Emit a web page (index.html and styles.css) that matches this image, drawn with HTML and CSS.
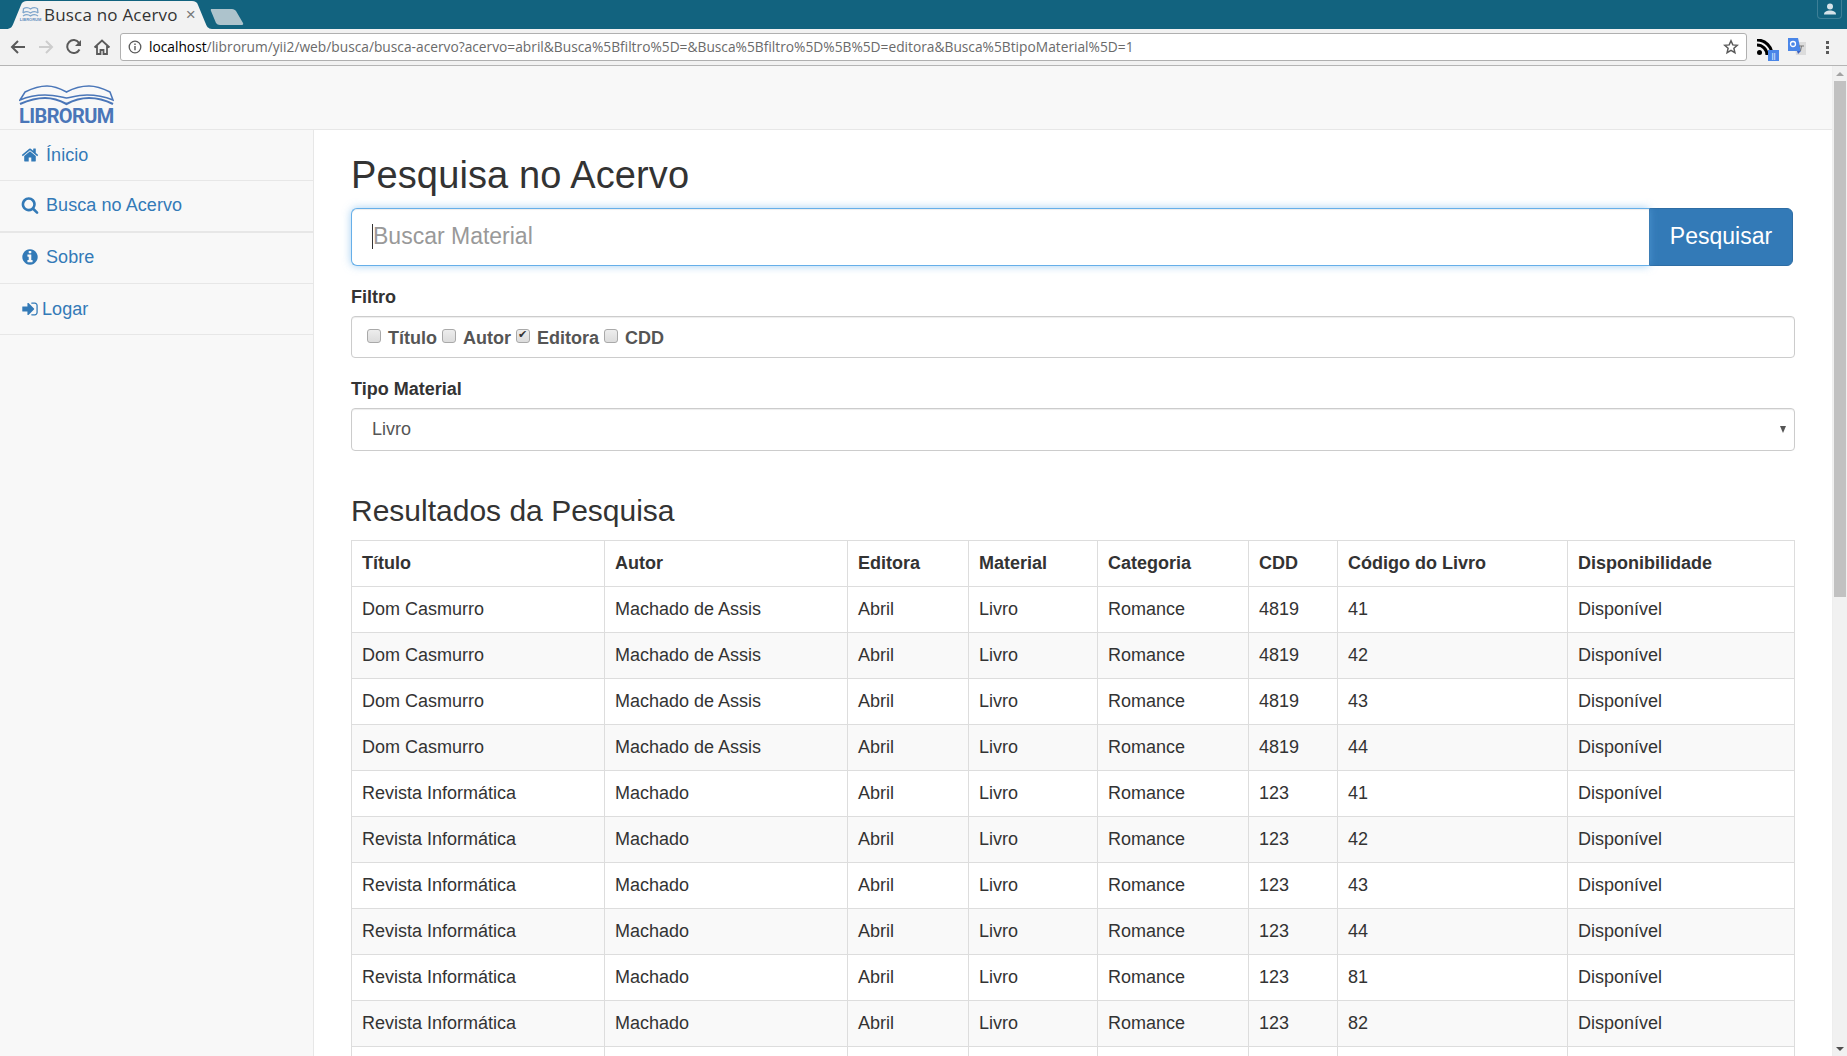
FILE: index.html
```html
<!DOCTYPE html>
<html lang="en">
<head>
    <meta charset="UTF-8">
    <meta name="viewport" content="width=device-width, initial-scale=1.0">
    <title>Busca no Acervo</title>
    <link rel="stylesheet" href="styles.css">
</head>
<body>
    <div class="tabstrip">
        <div class="tab">
            <svg class="tab-bg" width="212" height="29" viewBox="0 0 212 29"><path d="M6 29c5 0 6-2 8-7L21 5c1-3 3-4 6-4h165c3 0 5 1 6 4l7 17c2 5 3 7 8 7z" fill="#f2f2f2"/></svg>
            <span class="favicon">
                <svg width="17" height="11" viewBox="0 0 17 11"><path d="M1 3c3-2 5-2 7.500 0 3-2 5-2 7.500 0M1 7l.5-4M16 7l-.5-4M1 7c3-2 5-2 7.500 0 3-2 5-2 7.500 0M1 10c3-2 5-2 7.500 0 3-2 5-2 7.500 0" fill="none" stroke="#7fa6cc" stroke-width="1.300"/></svg>
                <span class="favicon-text">LIBRORUM</span>
            </span>
            <span class="tab-title">Busca no Acervo</span>
            <span class="tab-close">×</span>
        </div>
        <svg class="newtab" width="34" height="17" viewBox="0 0 34 17"><path d="M1 1h21c2 0 3 1 4 2l7 12c.5 1 0 2-1 2H10c-2 0-3-1-4-2L1 3c-.5-1 0-2 0-2z" fill="#adc3cc"/></svg>
        <div class="profile">
            <svg width="14" height="12" viewBox="0 0 14 12"><circle cx="7" cy="3.500" r="3" fill="#d5e3e9"/><path d="M1 11.500c0-3 3-4 6-4s6 1 6 4z" fill="#d5e3e9"/></svg>
        </div>
    </div>

    <div class="toolbar">
        <svg class="tool" width="18" height="18" viewBox="0 0 18 18"><path d="M16 9H4M9 3L3 9l6 6" fill="none" stroke="#5a5a5a" stroke-width="2"/></svg>
        <svg class="tool" width="18" height="18" viewBox="0 0 18 18"><path d="M2 9h12M9 3l6 6-6 6" fill="none" stroke="#cdcdcd" stroke-width="2"/></svg>
        <svg class="tool" width="18" height="18" viewBox="0 0 18 18"><path d="M14.500 11.500A6.500 6.500 0 1 1 14 4.800" fill="none" stroke="#5a5a5a" stroke-width="2"/><path d="M16 2v6h-6z" fill="#5a5a5a"/></svg>
        <svg class="tool" width="18" height="18" viewBox="0 0 18 18"><path d="M1.500 9.500L9 2.500l7.500 7M4 8v8h3.500v-4h3v4H14V8" fill="none" stroke="#5a5a5a" stroke-width="1.800"/></svg>
        <div class="omnibox">
            <svg class="info" width="14" height="14" viewBox="0 0 14 14"><circle cx="7" cy="7" r="5.800" fill="none" stroke="#5a5a5a" stroke-width="1.300"/><path d="M6.300 6h1.400v4.300H6.300zM6.300 3.500h1.400v1.400H6.300z" fill="#5a5a5a"/></svg>
            <span class="url"><b>localhost</b>/librorum/yii2/web/busca/busca-acervo?acervo=abril&amp;Busca%5Bfiltro%5D=&amp;Busca%5Bfiltro%5D%5B%5D=editora&amp;Busca%5BtipoMaterial%5D=1</span>
            <svg class="star" width="16" height="16" viewBox="0 0 16 16"><path d="M8 1.800l1.800 4.100 4.500.4-3.400 3 1 4.400L8 11.400l-3.900 2.300 1-4.400-3.400-3 4.500-.4z" fill="none" stroke="#5a5a5a" stroke-width="1.500"/></svg>
        </div>
        <div class="ext-rss">
            <svg width="16" height="16" viewBox="0 0 16 16"><circle cx="2.500" cy="13.500" r="2.500"/><path d="M0 6a10 10 0 0 1 10 10M0 1a15 15 0 0 1 15 15" fill="none" stroke="#000" stroke-width="3"/></svg>
            <span class="ext-badge">||</span>
        </div>
        <svg class="ext-translate" width="18" height="18" viewBox="0 0 18 18"><path d="M6 4h12v13H8z" fill="#dcdcdc"/><path d="M0 0h10l3 13H0z" fill="#4a86e8"/><circle cx="5" cy="6" r="2.500" fill="none" stroke="#fff" stroke-width="1.300"/><path d="M9 13l1 3 3-3z" fill="#3a5fc0"/><path d="M11 8h5M13.500 8l-1 5" stroke="#777" fill="none"/></svg>
        <div class="menu-dots"><i></i><i></i><i></i></div>
    </div>

    <div class="viewport">
        <div class="page">
            <div class="navbar">
                <a class="logo" href="#">
                    <svg width="95" height="23" viewBox="0 0 95 23"><path d="M6 8C14 4 22 2 28 2c8 0 14 3 19.500 6C53 5 60 2 70 2c8 0 15 3 21 6l3 8c-10-4-18-5-26-5-8 0-15 2-20.500 3C42 13 34 11 26 11c-8 0-18 2-25 5z" fill="none" stroke="#4a76b8" stroke-width="1.600"/><path d="M1 20c9-4 17-6 25-6 8 0 16 3 21.500 6C53 17 60 14 70 14c8 0 16 2 24 6" fill="none" stroke="#4a76b8" stroke-width="2.200"/></svg>
                    <span class="logo-text">LIBRORUM</span>
                </a>
            </div>
            <div class="main">
                <ul class="sidebar">
                    <li><a href="#"><svg class="ico" width="18" height="18" viewBox="0 0 1792 1792"><path d="M1472 992v480q0 26-19 45t-45 19h-384v-384h-256v384h-384q-26 0-45-19t-19-45v-480q0-1 .5-3t.5-3l575-474 575 474q1 2 1 6zm223-69l-62 74q-8 9-21 11h-3q-13 0-21-7l-692-577-692 577q-12 8-24 7-13-2-21-11l-62-74q-8-10-7-23.500t11-21.500l719-599q32-26 76-26t76 26l244 204v-195q0-14 9-23t23-9h192q14 0 23 9t9 23v408l219 182q10 8 11 21.500t-7 23.500z"/></svg><span class="gap">Ínicio</span></a></li>
                    <li><a href="#"><svg class="ico" width="18" height="18" viewBox="0 0 1792 1792"><path d="M1216 832q0-185-131.500-316.500t-316.500-131.500-316.500 131.500-131.500 316.500 131.500 316.500 316.500 131.500 316.500-131.500 131.500-316.500zm512 832q0 52-38 90t-90 38q-54 0-90-38l-343-342q-179 124-399 124-143 0-273.500-55.500t-225-150-150-225-55.500-273.500 55.500-273.500 150-225 225-150 273.500-55.500 273.500 55.500 225 150 150 225 55.500 273.500q0 220-124 399l343 343q37 37 37 90z"/></svg><span class="gap">Busca no Acervo</span></a></li>
                    <li><a href="#"><svg class="ico" width="18" height="18" viewBox="0 0 1792 1792"><path d="M1152 1376v-160q0-14-9-23t-23-9h-96v-512q0-14-9-23t-23-9h-320q-14 0-23 9t-9 23v160q0 14 9 23t23 9h96v320h-96q-14 0-23 9t-9 23v160q0 14 9 23t23 9h448q14 0 23-9t9-23zm-128-896v-160q0-14-9-23t-23-9h-192q-14 0-23 9t-9 23v160q0 14 9 23t23 9h192q14 0 23-9t9-23zm640 416q0 209-103 385.500t-279.500 279.500-385.500 103-385.500-103-279.500-279.500-103-385.500 103-385.500 279.500-279.500 385.500-103 385.500 103 279.500 279.500 103 385.500z"/></svg><span class="gap">Sobre</span></a></li>
                    <li><a href="#"><svg class="ico" width="18" height="18" viewBox="0 0 1792 1792"><path d="M1312 896q0 26-19 45l-544 544q-19 19-45 19t-45-19-19-45v-288h-448q-26 0-45-19t-19-45v-384q0-26 19-45t45-19h448v-288q0-26 19-45t45-19 45 19l544 544q19 19 19 45zm352-352v704q0 119-84.500 203.500t-203.500 84.500h-320q-13 0-22.500-9.500t-9.500-22.500q0-4-1-20t-.5-26.500 3-23.500 10-19.500 20.500-6.500h320q66 0 113-47t47-113v-704q0-66-47-113t-113-47h-312l-11.500-1-11.500-3-8-5.500-7-9-2-13.500q0-4-1-20t-.5-26.500 3-23.500 10-19.500 20.500-6.500h320q119 0 203.500 84.500t84.500 203.500z"/></svg><span class="gap-small">Logar</span></a></li>
                </ul>
                <div class="content">
                    <h1>Pesquisa no Acervo</h1>
                    <div class="search-group">
                        <div class="search-field">
                            <input class="search-input" type="text" placeholder="Buscar Material">
                            <span class="caret"></span>
                        </div>
                        <button class="search-btn">Pesquisar</button>
                    </div>
                    <label class="field-label">Filtro</label>
                    <div class="filter-box">
                        <label><input type="checkbox"><span>Título</span></label>
                        <label><input type="checkbox"><span>Autor</span></label>
                        <label><input type="checkbox" checked><span>Editora</span></label>
                        <label><input type="checkbox"><span>CDD</span></label>
                    </div>
                    <label class="field-label">Tipo Material</label>
                    <div class="select-box">Livro</div>
                    <h2>Resultados da Pesquisa</h2>
                    <table>
                        <thead>
                            <tr>
                                <th class="c1">Título</th>
                                <th class="c2">Autor</th>
                                <th class="c3">Editora</th>
                                <th class="c4">Material</th>
                                <th class="c5">Categoria</th>
                                <th class="c6">CDD</th>
                                <th class="c7">Código do Livro</th>
                                <th class="c8">Disponibilidade</th>
                            </tr>
                        </thead>
                        <tbody id="rows"></tbody>
                    </table>
                </div>
            </div>
        </div>
        <div class="scrollbar">
            <span class="arrow-up"></span>
            <div class="thumb"></div>
            <span class="arrow-down"></span>
        </div>
    </div>

    <script type="text/javascript">
        const livros = [
            ["Dom Casmurro", "Machado de Assis", "4819", "41"],
            ["Dom Casmurro", "Machado de Assis", "4819", "42"],
            ["Dom Casmurro", "Machado de Assis", "4819", "43"],
            ["Dom Casmurro", "Machado de Assis", "4819", "44"],
            ["Revista Informática", "Machado", "123", "41"],
            ["Revista Informática", "Machado", "123", "42"],
            ["Revista Informática", "Machado", "123", "43"],
            ["Revista Informática", "Machado", "123", "44"],
            ["Revista Informática", "Machado", "123", "81"],
            ["Revista Informática", "Machado", "123", "82"]
        ];
        let tbl = "";
        livros.map((val) => {
            tbl += `
                <tr>
                    <td>${val[0]}</td>
                    <td>${val[1]}</td>
                    <td>Abril</td>
                    <td>Livro</td>
                    <td>Romance</td>
                    <td>${val[2]}</td>
                    <td>${val[3]}</td>
                    <td>Disponível</td>
                </tr>
            `;
        });
        // next row starts right at the fold, its text is below the window
        tbl += "<tr>" + "<td></td>".repeat(8) + "</tr>";
        document.getElementById("rows").innerHTML = tbl;
    </script>
</body>
</html>
```

FILE: styles.css
```css
* {
    box-sizing: border-box;
}
html, body {
    height: 100%;
}
body {
    margin: 0;
    overflow: hidden;
    font-family: "Liberation Sans", Arial, sans-serif;
    font-size: 18px;
    color: #333;
    background: #fff;
}

/* browser chrome */
.tabstrip {
    position: relative;
    display: flex;
    align-items: flex-end;
    height: 29px;
    background: #12637f;
}
.tab {
    position: relative;
    display: flex;
    align-items: center;
    width: 212px;
    height: 29px;
    padding: 0 0 0 22px;
    flex-shrink: 0;
}
.tab-bg {
    position: absolute;
    left: 0;
    top: 0;
}
.favicon {
    position: relative;
    display: flex;
    flex-direction: column;
    align-items: center;
    width: 17px;
    line-height: 6px;
}
.favicon-text {
    font-size: 4px;
    font-weight: bold;
    color: #5f8fbe;
}
.tab-title {
    position: relative;
    margin-left: 5px;
    font-family: "Open Sans", sans-serif;
    font-size: 17px;
    letter-spacing: .2px;
    color: #333;
    white-space: nowrap;
}
.tab-close {
    position: relative;
    margin-left: 8px;
    font-size: 17px;
    color: #777;
}
.newtab {
    margin: 0 0 4px -2px;
}
.profile {
    position: absolute;
    top: 0;
    right: 5px;
    display: flex;
    align-items: center;
    justify-content: center;
    width: 25px;
    height: 19px;
    border: 1px solid #3d7f97;
    border-top: none;
    border-radius: 0 0 4px 4px;
}
.toolbar {
    display: flex;
    align-items: center;
    height: 37px;
    padding: 0 0 0 9px;
    background: #f2f2f2;
    border-bottom: 1px solid #b5b5b5;
}
.tool {
    margin-right: 10px;
    flex-shrink: 0;
}
.omnibox {
    display: flex;
    align-items: center;
    width: 1627px;
    height: 28px;
    margin-left: -1px;
    padding: 0 7px;
    background: #fff;
    border: 1px solid #b0b0b0;
    border-radius: 3px;
    flex-shrink: 0;
}
.info {
    flex-shrink: 0;
}
.url {
    flex: 1;
    margin: -2px 0 0 7px;
    font-family: "Open Sans", sans-serif;
    font-size: 13.750px;
    color: #6a6a6a;
    white-space: nowrap;
    overflow: hidden;
}
.url b {
    font-weight: normal;
    color: #000;
}
.ext-rss {
    position: relative;
    width: 22px;
    height: 22px;
    margin: 6px 0 0 10px;
    flex-shrink: 0;
}
.ext-rss svg {
    position: absolute;
    left: 0;
    top: 0;
}
.ext-badge {
    position: absolute;
    right: 0;
    bottom: 0;
    width: 11px;
    height: 11px;
    background: #4a86e8;
    color: #fff;
    font-size: 8px;
    line-height: 11px;
    text-align: center;
}
.ext-translate {
    margin-left: 9px;
    flex-shrink: 0;
}
.menu-dots {
    display: flex;
    flex-direction: column;
    gap: 2px;
    margin-left: 20px;
}
.menu-dots i {
    width: 3px;
    height: 3px;
    background: #5a5a5a;
}

/* page */
.viewport {
    display: flex;
    height: 990px;
}
.page {
    flex: 1;
    min-width: 0;
    overflow: hidden;
}
.navbar {
    height: 64px;
    background: #f8f8f8;
    border-bottom: 1px solid #e7e7e7;
}
.logo {
    display: inline-flex;
    flex-direction: column;
    align-items: flex-start;
    margin: 18px 0 0 19px;
    text-decoration: none;
}
.logo svg {
    display: block;
}
.logo-text {
    margin-top: -1px;
    font-family: Roboto, sans-serif;
    font-size: 20px;
    font-weight: bold;
    line-height: 20px;
    letter-spacing: -.6px;
    color: #4a76b8;
}
.main {
    display: flex;
    min-height: 926px;
}
.sidebar {
    width: 314px;
    flex-shrink: 0;
    margin: 0;
    padding: 0;
    list-style: none;
    background: #f8f8f8;
    border-right: 1px solid #e7e7e7;
}
.sidebar li {
    border-bottom: 1px solid #e7e7e7;
}
.sidebar li:nth-child(2) {
    border-bottom-width: 2px;
    height: 52px;
}
.sidebar a {
    display: flex;
    align-items: center;
    height: 50px;
    padding-left: 21px;
    color: #337ab7;
    letter-spacing: .07px;
    text-decoration: none;
}
.sidebar li:nth-child(2) a, .sidebar li:nth-child(3) a {
    padding-bottom: 2px;
}
.ico {
    fill: #337ab7;
    flex-shrink: 0;
}
.gap {
    margin-left: 7px;
}
.gap-small {
    margin-left: 3px;
}
.content {
    flex: 1;
    min-width: 0;
    padding: 0 37px;
}
h1 {
    margin: 21px 0 0;
    height: 47px;
    font-size: 38px;
    font-weight: 500;
    line-height: 48px;
    letter-spacing: .13px;
    color: #333;
}
.search-group {
    display: flex;
    height: 58px;
    margin-top: 10px;
    margin-right: 2px;
}
.search-field {
    position: relative;
    flex: 1;
}
.search-input {
    width: 100%;
    height: 100%;
    padding: 0 21px 2px;
    border: 1px solid #66afe9;
    border-right: none;
    border-radius: 6px 0 0 6px;
    outline: none;
    font-family: inherit;
    font-size: 23px;
    box-shadow: inset 0 1px 1px rgba(0, 0, 0, .075), 0 0 8px rgba(102, 175, 233, .6);
}
.search-input::placeholder {
    color: #999;
}
.caret {
    position: absolute;
    left: 21px;
    top: 16px;
    width: 1px;
    height: 25px;
    background: #333;
}
.search-btn {
    width: 144px;
    padding: 0 0 2px;
    border: 1px solid #2e6da4;
    border-radius: 0 6px 6px 0;
    background: #337ab7;
    color: #fff;
    font-family: inherit;
    font-size: 23px;
}
.field-label {
    display: block;
    height: 30px;
    margin: 16px 0 4px;
    font-weight: bold;
    line-height: 30px;
}
.filter-box {
    display: flex;
    align-items: center;
    height: 42px;
    padding: 2px 15px 0;
    border: 1px solid #ccc;
    border-radius: 4px;
    box-shadow: inset 0 1px 1px rgba(0, 0, 0, .075);
    color: #555;
    font-weight: bold;
}
.filter-box label {
    display: flex;
    align-items: center;
    margin-right: 5px;
}
.filter-box span {
    margin-left: 7px;
}
.filter-box input {
    appearance: none;
    position: relative;
    width: 14px;
    height: 14px;
    margin: -5px 0 0 0;
    border: 1px solid #a9a9a9;
    border-radius: 3px;
    background: linear-gradient(#ededed, #dcdcdc);
}
.filter-box input:checked::after {
    content: "✔";
    position: absolute;
    left: 1px;
    top: -2px;
    font-family: "DejaVu Sans", sans-serif;
    font-size: 11px;
    line-height: 14px;
    color: #333;
}
.select-box {
    position: relative;
    height: 43px;
    padding-left: 20px;
    border: 1px solid #ccc;
    border-radius: 4px;
    box-shadow: inset 0 1px 1px rgba(0, 0, 0, .075);
    color: #555;
    line-height: 41px;
}
.select-box::after {
    content: "";
    position: absolute;
    right: 8px;
    top: 17px;
    border-left: 3.500px solid transparent;
    border-right: 3.500px solid transparent;
    border-top: 7px solid #555;
}
h2 {
    margin: 43px 0 0;
    height: 46px;
    font-size: 30px;
    font-weight: 500;
    line-height: 33px;
    color: #333;
}
table {
    width: 1443px;
    table-layout: fixed;
    border-collapse: collapse;
}
th, td {
    height: 46px;
    padding: 0 10px;
    border: 1px solid #ddd;
    text-align: left;
    white-space: nowrap;
}
tbody tr:nth-child(odd) {
    background: #fff;
}
tbody tr:nth-child(even) {
    background: #f9f9f9;
}
.c1 { width: 253px; }
.c2 { width: 243px; }
.c3 { width: 121px; }
.c4 { width: 129px; }
.c5 { width: 151px; }
.c6 { width: 89px; }
.c7 { width: 230px; }
.c8 { width: 227px; }

/* fake scrollbar of the window */
.scrollbar {
    display: flex;
    flex-direction: column;
    align-items: center;
    width: 15px;
    flex-shrink: 0;
    background: #f1f1f1;
    border-left: 1px solid #eee;
}
.arrow-up {
    margin-top: 6px;
    border-left: 4px solid transparent;
    border-right: 4px solid transparent;
    border-bottom: 4px solid #a3a3a3;
}
.thumb {
    width: 12px;
    height: 516px;
    margin-top: 5px;
    background: #c1c1c1;
}
.arrow-down {
    margin-top: auto;
    margin-bottom: 5px;
    border-left: 4px solid transparent;
    border-right: 4px solid transparent;
    border-top: 4px solid #505050;
}
```
